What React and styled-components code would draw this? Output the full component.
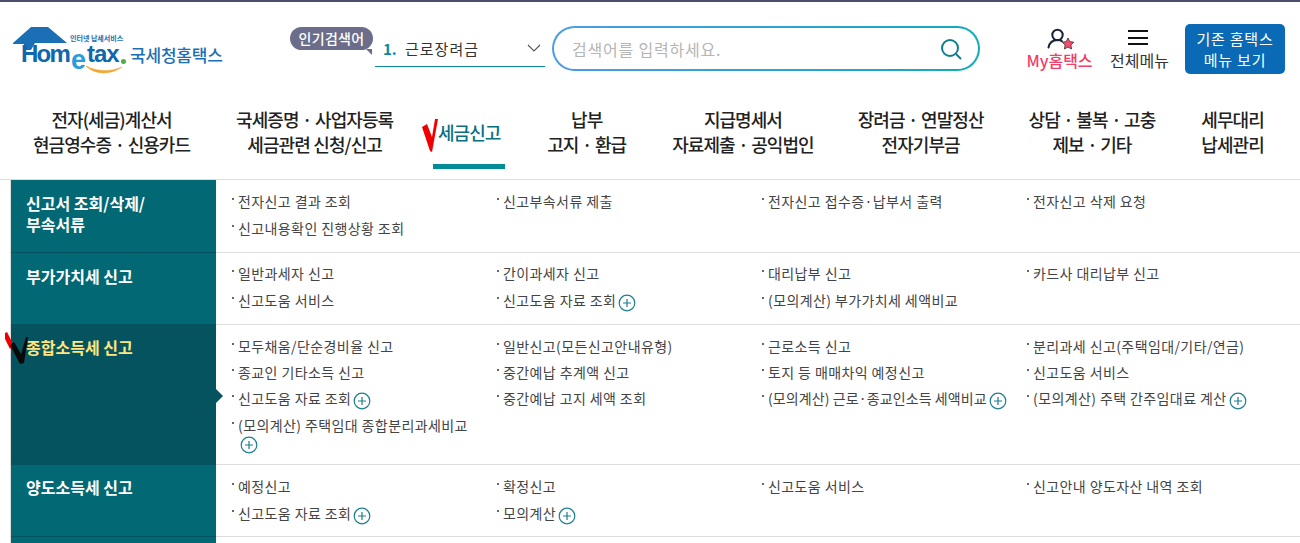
import styled, { createGlobalStyle } from "styled-components";

const GlobalStyle = createGlobalStyle`
    html, body {
        margin: 0;
        padding: 0;
        background: #fff;
        overflow: hidden;
    }
    * {
        box-sizing: border-box;
    }
    body {
        font-family: "Noto Sans CJK KR", "Noto Sans", sans-serif;
    }
`;

const navItems = [
    { lines: ["전자(세금)계산서", "현금영수증 · 신용카드"] },
    { lines: ["국세증명 · 사업자등록", "세금관련 신청/신고"] },
    { lines: ["세금신고"], active: true },
    { lines: ["납부", "고지 · 환급"] },
    { lines: ["지급명세서", "자료제출 · 공익법인"] },
    { lines: ["장려금 · 연말정산", "전자기부금"], nudge: -2 },
    { lines: ["상담 · 불복 · 고충", "제보 · 기타"], nudge: -1 },
    { lines: ["세무대리", "납세관리"] },
];

const sections = [
    {
        title: ["신고서 조회/삭제/", "부속서류"],
        titleTop: 13,
        top: 8,
        gap: 1,
        minHeight: 72,
        items: [
            { label: "전자신고 결과 조회" },
            { label: "신고부속서류 제출" },
            { label: "전자신고 접수증·납부서 출력" },
            { label: "전자신고 삭제 요청" },
            { label: "신고내용확인 진행상황 조회" },
        ],
    },
    {
        title: ["부가가치세 신고"],
        titleTop: 13,
        top: 7,
        gap: 1,
        minHeight: 71,
        items: [
            { label: "일반과세자 신고" },
            { label: "간이과세자 신고" },
            { label: "대리납부 신고" },
            { label: "카드사 대리납부 신고" },
            { label: "신고도움 서비스" },
            { label: "신고도움 자료 조회", plus: true },
            { label: "(모의계산) 부가가치세 세액비교" },
        ],
    },
    {
        title: ["종합소득세 신고"],
        titleTop: 12,
        top: 8,
        gap: 0,
        minHeight: 139,
        active: true,
        items: [
            { label: "모두채움/단순경비율 신고" },
            { label: "일반신고(모든신고안내유형)" },
            { label: "근로소득 신고" },
            { label: "분리과세 신고(주택임대/기타/연금)" },
            { label: "종교인 기타소득 신고" },
            { label: "중간예납 추계액 신고" },
            { label: "토지 등 매매차익 예정신고" },
            { label: "신고도움 서비스" },
            { label: "신고도움 자료 조회", plus: true },
            { label: "중간예납 고지 세액 조회" },
            { label: "(모의계산) 근로·종교인소득 세액비교", plus: true, tight: true },
            { label: "(모의계산) 주택 간주임대료 계산", plus: true },
            { label: "(모의계산) 주택임대 종합분리과세비교", plus: true },
        ],
    },
    {
        title: ["양도소득세 신고"],
        titleTop: 12,
        top: 8,
        gap: 1,
        minHeight: 71,
        items: [
            { label: "예정신고" },
            { label: "확정신고" },
            { label: "신고도움 서비스" },
            { label: "신고안내 양도자산 내역 조회" },
            { label: "신고도움 자료 조회", plus: true },
            { label: "모의계산", plus: true },
        ],
    },
];

function PlusIcon() {
    return (
        <PlusSvg width="18" height="18" viewBox="0 0 18 18">
            <circle cx="9" cy="9" r="7.8" fill="#fff" stroke="#1b7f8c" strokeWidth="1.2" />
            <path d="M9 5v8M5 9h8" stroke="#1b7f8c" strokeWidth="1.2" />
        </PlusSvg>
    );
}

function Logo() {
    return (
        <LogoWrap>
            <svg width="54" height="26" viewBox="0 0 54 26">
                <path d="M0 17 L18 1 H35 L54 17 H22 L18 24 H11 V18 H0 Z" fill="#1a6fb5" />
            </svg>
            <LogoSmall>인터넷 납세서비스</LogoSmall>
            <LogoWord>Hom</LogoWord>
            <LogoE>e</LogoE>
            <LogoTax>tax</LogoTax>
            <LogoDot />
            <LogoSmile width="38" height="10" viewBox="0 0 38 10">
                <path d="M1 1 C10 10 26 10 37 2 C26 7 12 7 1 1 Z" fill="#f0a830" stroke="#f0a830" strokeWidth="0.6" />
            </LogoSmile>
            <LogoName>국세청홈택스</LogoName>
        </LogoWrap>
    );
}

export default function App() {
    return (
        <Page>
            <GlobalStyle />
            <Header>
                <Logo />
                <Popular>인기검색어</Popular>
                <Rank>
                    <RankNum>1.</RankNum>
                    <RankText>근로장려금</RankText>
                    <svg width="14" height="8" viewBox="0 0 14 8">
                        <path d="M1 1l6 6 6-6" fill="none" stroke="#555" strokeWidth="1.1" />
                    </svg>
                </Rank>
                <SearchBox>
                    <SearchHint>검색어를 입력하세요.</SearchHint>
                    <svg width="22" height="22" viewBox="0 0 22 22">
                        <circle cx="10" cy="10" r="8" fill="none" stroke="#0e7f8e" strokeWidth="2" />
                        <path d="M16 16l5 5" stroke="#0e7f8e" strokeWidth="2" />
                    </svg>
                </SearchBox>
                <MyLink>
                    <svg width="28" height="24" viewBox="0 0 28 24">
                        <circle cx="11.5" cy="8" r="5.2" fill="none" stroke="#1a2238" strokeWidth="2" />
                        <path d="M2.5 20.5c1-5 4-7.5 9-7.5 2 0 3.5 .4 4.5 1.2" fill="none" stroke="#1a2238" strokeWidth="2" strokeLinecap="round" />
                        <path d="M22 11l1.8 3.6 4 .6-2.9 2.8.7 4-3.6-1.9-3.6 1.9.7-4-2.9-2.8 4-.6z" fill="#f0506e" stroke="#333" strokeWidth="0.8" />
                    </svg>
                    <MyLabel>My홈택스</MyLabel>
                </MyLink>
                <AllMenu>
                    <Burger>
                        <span />
                        <span />
                        <span />
                    </Burger>
                    <AllLabel>전체메뉴</AllLabel>
                </AllMenu>
                <OldButton>
                    기존 홈택스
                    <br />
                    메뉴 보기
                </OldButton>
            </Header>
            <Nav>
                {navItems.map((item) => (
                    <NavItem key={item.lines[0]} $active={item.active} $nudge={item.nudge}>
                        {item.lines.map((line) => (
                            <div key={line}>{line}</div>
                        ))}
                        {item.active && (
                            <Check width="16" height="33" viewBox="0 0 16 33">
                                <path d="M0 8 L5 5 L10 18 L13 0 H16 L10 33 L8 32 Z" fill="#f00000" />
                            </Check>
                        )}
                    </NavItem>
                ))}
            </Nav>
            <Table>
                {sections.map((section) => (
                    <Row key={section.title[0]}>
                        <RowTitle $active={section.active} $top={section.titleTop}>
                            {section.title.map((line) => (
                                <div key={line}>{line}</div>
                            ))}
                            {section.active && (
                                <>
                                    <BlackCheck width="23" height="32" viewBox="0 0 23 32">
                                        <path d="M0 1 L2 0 L9 14 L5 17 L0 7 Z" fill="#f00000" />
                                        <path d="M5 13 L9 10 L16 22 L21 5 H23 L19 31 L15 32 Z" fill="#0a0a0a" />
                                    </BlackCheck>
                                    <Notch />
                                </>
                            )}
                        </RowTitle>
                        <RowItems $top={section.top} $gap={section.gap} $minHeight={section.minHeight}>
                            {section.items.map((item) => (
                                <Item key={item.label} $tight={item.tight}>
                                    {item.label}
                                    {item.plus && <PlusIcon />}
                                </Item>
                            ))}
                        </RowItems>
                    </Row>
                ))}
                <Row>
                    <RowTitle $top={13} />
                    <RowItems $top={9} $gap={1} $minHeight={71} />
                </Row>
            </Table>
        </Page>
    );
}

const Page = styled.div`
    width: 1300px;
    height: 543px;
    overflow: hidden;
    border-top: 2px solid #4a4f6b;
`;

const Header = styled.header`
    height: 88px;
    display: flex;
    align-items: flex-start;
    padding-left: 13px;
`;

const LogoWrap = styled.div`
    position: relative;
    width: 210px;
    height: 50px;
    margin-top: 24px;
    flex: none;
`;

const LogoSmall = styled.span`
    position: absolute;
    left: 57px;
    top: 8px;
    font-size: 7px;
    line-height: 8px;
    font-weight: 700;
    color: #1a6fb5;
    white-space: nowrap;
`;

const LogoWord = styled.span`
    position: absolute;
    left: 8px;
    top: 16px;
    font-family: "Liberation Sans", sans-serif;
    font-size: 24px;
    line-height: 1;
    font-weight: 700;
    letter-spacing: -1.8px;
    color: #0f67ad;
`;

const LogoE = styled.span`
    position: absolute;
    left: 58px;
    top: 21px;
    font-family: "Liberation Sans", sans-serif;
    font-size: 27px;
    line-height: 1;
    font-weight: 700;
    color: #2a9bdc;
`;

const LogoTax = styled.span`
    position: absolute;
    left: 74px;
    top: 16px;
    font-family: "Liberation Sans", sans-serif;
    font-size: 24px;
    line-height: 1;
    font-weight: 700;
    letter-spacing: -1px;
    color: #0f67ad;
`;

const LogoDot = styled.span`
    position: absolute;
    left: 108px;
    top: 33px;
    width: 5px;
    height: 5px;
    border-radius: 50%;
    background: #4caf3a;
`;

const LogoSmile = styled.svg`
    position: absolute;
    left: 72px;
    top: 39px;
`;

const LogoName = styled.span`
    position: absolute;
    left: 117px;
    top: 16px;
    font-size: 17px;
    font-weight: 500;
    letter-spacing: -0.2px;
    color: #1a6fb5;
    white-space: nowrap;
`;

const Popular = styled.div`
    position: relative;
    margin: 25px 0 0 67px;
    width: 83px;
    height: 23px;
    flex: none;
    border-radius: 12px;
    background: #6b6d8a;
    color: #fff;
    font-size: 14px;
    font-weight: 500;
    line-height: 22px;
    letter-spacing: 0.3px;
    text-align: center;

    &::after {
        content: "";
        position: absolute;
        right: 1px;
        bottom: -5px;
        border-top: 6px solid #6b6d8a;
        border-left: 6px solid transparent;
    }
`;

const Rank = styled.div`
    width: 170px;
    height: 37px;
    margin: 28px 0 0 2px;
    flex: none;
    display: flex;
    align-items: center;
    padding: 0 4px 0 8px;
    border-bottom: 1px solid #0b8a9b;
`;

const RankNum = styled.span`
    font-size: 15px;
    font-weight: 700;
    color: #0b8a9b;
    width: 22px;
`;

const RankText = styled.span`
    flex: 1;
    font-size: 15px;
    letter-spacing: 1px;
    color: #333;
`;

const SearchBox = styled.div`
    width: 428px;
    height: 45px;
    margin: 24px 0 0 7px;
    flex: none;
    display: flex;
    align-items: center;
    justify-content: space-between;
    padding: 0 16px 0 18px;
    border-radius: 23px;
    border: 2px solid transparent;
    background: linear-gradient(#fff, #fff) padding-box, linear-gradient(90deg, #4a9ce8, #12aabb) border-box;
`;

const SearchHint = styled.span`
    font-size: 16px;
    letter-spacing: 0.8px;
    color: #b5b5b5;
`;

const MyLink = styled.div`
    width: 67px;
    margin: 25px 0 0 46px;
    flex: none;
    display: flex;
    flex-direction: column;
    align-items: center;
`;

const MyLabel = styled.span`
    margin-top: -1px;
    font-size: 16px;
    line-height: 20px;
    font-weight: 500;
    color: #f0406a;
    white-space: nowrap;
`;

const AllMenu = styled.div`
    width: 59px;
    margin: 28px 0 0 17px;
    flex: none;
    display: flex;
    flex-direction: column;
    align-items: center;
`;

const Burger = styled.div`
    width: 20px;
    height: 15px;
    display: flex;
    flex-direction: column;
    justify-content: space-between;
    margin: 0 3px 5px 0;

    span {
        display: block;
        height: 2px;
        background: #111;
    }
`;

const AllLabel = styled.span`
    font-size: 16px;
    line-height: 20px;
    color: #333;
    white-space: nowrap;
`;

const OldButton = styled.button`
    width: 100px;
    height: 50px;
    margin: 22px 0 0 16px;
    flex: none;
    padding: 0;
    border: none;
    border-radius: 5px;
    background: #0a6ab5;
    color: #fff;
    font-family: inherit;
    font-size: 15px;
    line-height: 21px;
    letter-spacing: 0.8px;
`;

const Nav = styled.nav`
    height: 90px;
    display: flex;
    gap: 46px;
    padding: 17px 0 0 33px;
    border-bottom: 1px solid #ddd;
`;

const NavItem = styled.div`
    position: relative;
    flex: none;
    height: 72px;
    margin-left: ${(p) => p.$nudge || 0}px;
    font-size: 18px;
    font-weight: 500;
    line-height: 25px;
    letter-spacing: -0.95px;
    word-spacing: 0.5px;
    text-align: center;
    color: #222;
    white-space: nowrap;
    ${(p) =>
        p.$active &&
        `
        width: 72px;
        margin: 0 -4px 0 -6px;
        padding-top: 13px;
        color: #0b6f80;
        border-bottom: 5px solid #008c99;
        height: 62px;
    `}
`;

const Check = styled.svg`
    position: absolute;
    left: -11px;
    top: 12px;
`;

const Table = styled.div`
    margin-left: 10px;
    border-left: 1px solid #ddd;
`;

const Row = styled.section`
    display: flex;
    border-bottom: 1px solid #ddd;
`;

const RowTitle = styled.div`
    position: relative;
    width: 205px;
    flex: none;
    padding: ${(p) => p.$top}px 10px 10px 15px;
    margin-bottom: -1px;
    background: ${(p) => (p.$active ? "#05535f" : "#026873")};
    border-bottom: 1px solid #05535f;
    color: ${(p) => (p.$active ? "#ffe680" : "#fff")};
    font-size: 16px;
    font-weight: 700;
    line-height: 21px;
    letter-spacing: 0;
`;

const BlackCheck = styled.svg`
    position: absolute;
    left: -6px;
    top: 7px;
`;

const Notch = styled.span`
    position: absolute;
    right: -7px;
    top: 64px;
    border-left: 7px solid #05535f;
    border-top: 7px solid transparent;
    border-bottom: 7px solid transparent;
`;

const RowItems = styled.div`
    flex: 1;
    display: grid;
    grid-template-columns: repeat(4, 265px);
    align-content: start;
    row-gap: ${(p) => p.$gap}px;
    padding: ${(p) => p.$top}px 0 0 15px;
    min-height: ${(p) => p.$minHeight}px;
`;

const Item = styled.div`
    position: relative;
    width: 252px;
    padding: 5px 0 4px 7px;
    font-size: 14px;
    line-height: 17px;
    letter-spacing: ${(p) => (p.$tight ? "0.1px" : "0.4px")};
    color: #444;

    &::before {
        content: "";
        position: absolute;
        left: 1px;
        top: 10px;
        width: 2px;
        height: 2px;
        background: #666;
    }
`;

const PlusSvg = styled.svg`
    vertical-align: -4px;
    margin: -2px 0 -2px 2px;
`;
